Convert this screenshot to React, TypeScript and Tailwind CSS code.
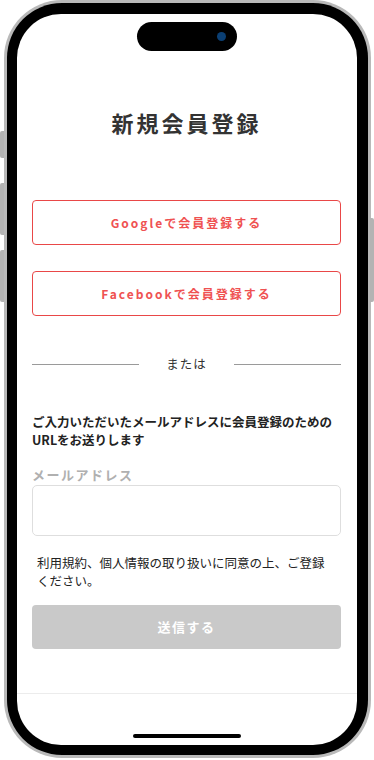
import React, { useState } from "react";

const jp = "font-['Noto_Sans_CJK_JP','Noto_Sans',sans-serif]";

function SideButtons() {
  return (
    <>
      <div className="absolute left-0 top-[131px] w-[4px] h-[27px] bg-[#b3b3b3] rounded-l-[2px]" />
      <div className="absolute left-0 top-[183px] w-[4px] h-[52px] bg-[#b3b3b3] rounded-l-[2px]" />
      <div className="absolute left-0 top-[250px] w-[4px] h-[52px] bg-[#b3b3b3] rounded-l-[2px]" />
      <div className="absolute right-0 top-[218px] w-[4px] h-[84px] bg-[#b3b3b3] rounded-r-[2px]" />
    </>
  );
}

export default function App() {
  const [email, setEmail] = useState("");

  return (
    <div className={`relative w-[374px] h-[760px] bg-white ${jp}`}>
      <SideButtons />
      <div className="ml-[4px] w-[367px] h-[758px] rounded-[58px] bg-[#b9b9b9] p-[3px]">
        <div className="w-full h-full rounded-[55px] bg-black pl-[10px] pr-[11px] pt-[11px] pb-[10px]">
          <div className="w-full h-full rounded-[44px] bg-white overflow-hidden flex flex-col">
            {/* dynamic island */}
            <div className="mt-[8px] mx-auto w-[100px] h-[29px] rounded-full bg-black flex items-center justify-end pr-[11px]">
              <div className="w-[9px] h-[9px] rounded-full bg-[#0b3f73]" />
            </div>

            <div className="pl-[15px] pr-[16px] flex flex-col">
              <h1 className="mt-[55px] text-center text-[22px] leading-[32px] font-bold tracking-[3px] text-[#333]">
                新規会員登録
              </h1>

              <button className="mt-[62px] h-[45px] w-full rounded-[4px] border border-[#e94848] text-[12px] font-bold tracking-[2px] text-[#ef5252]">
                Googleで会員登録する
              </button>
              <button className="mt-[26px] h-[45px] w-full rounded-[4px] border border-[#e94848] text-[12px] font-bold tracking-[2px] text-[#ef5252]">
                Facebookで会員登録する
              </button>

              <div className="mt-[38px] h-[20px] flex items-center gap-[27px]">
                <div className="flex-1 h-px bg-[#9a9a9a]" />
                <span className="text-[12.5px] text-[#333] tracking-[1px]">または</span>
                <div className="flex-1 h-px bg-[#9a9a9a]" />
              </div>

              <p className="mt-[39px] text-[12.5px] leading-[18px] font-bold text-[#222]">
                ご入力いただいたメールアドレスに会員登録のための
                <br />
                URLをお送りします
              </p>

              <label className="mt-[17px] text-[13px] leading-[18px] font-bold tracking-[1.5px] text-[#b0b0b0]">
                メールアドレス
              </label>
              <input
                type="email"
                value={email}
                onChange={(e) => setEmail(e.target.value)}
                className="mt-[1px] h-[51px] w-full rounded-[5px] border border-[#dedede] px-3 text-[14px] outline-none"
              />

              <p className="mt-[18px] pl-[5px] text-[12.5px] leading-[18px] text-[#222]">
                利用規約、個人情報の取り扱いに同意の上、ご登録
                <br />
                ください。
              </p>

              <button className="mt-[15px] h-[44px] w-full rounded-[4px] bg-[#c9c9c9] text-[13px] font-bold tracking-[1.5px] text-white">
                送信する
              </button>
            </div>

            <div className="mt-[44px] flex-1 border-t border-[#ececec] flex items-end justify-center pb-[7px]">
              <div className="w-[108px] h-[4px] rounded-full bg-black" />
            </div>
          </div>
        </div>
      </div>
    </div>
  );
}
